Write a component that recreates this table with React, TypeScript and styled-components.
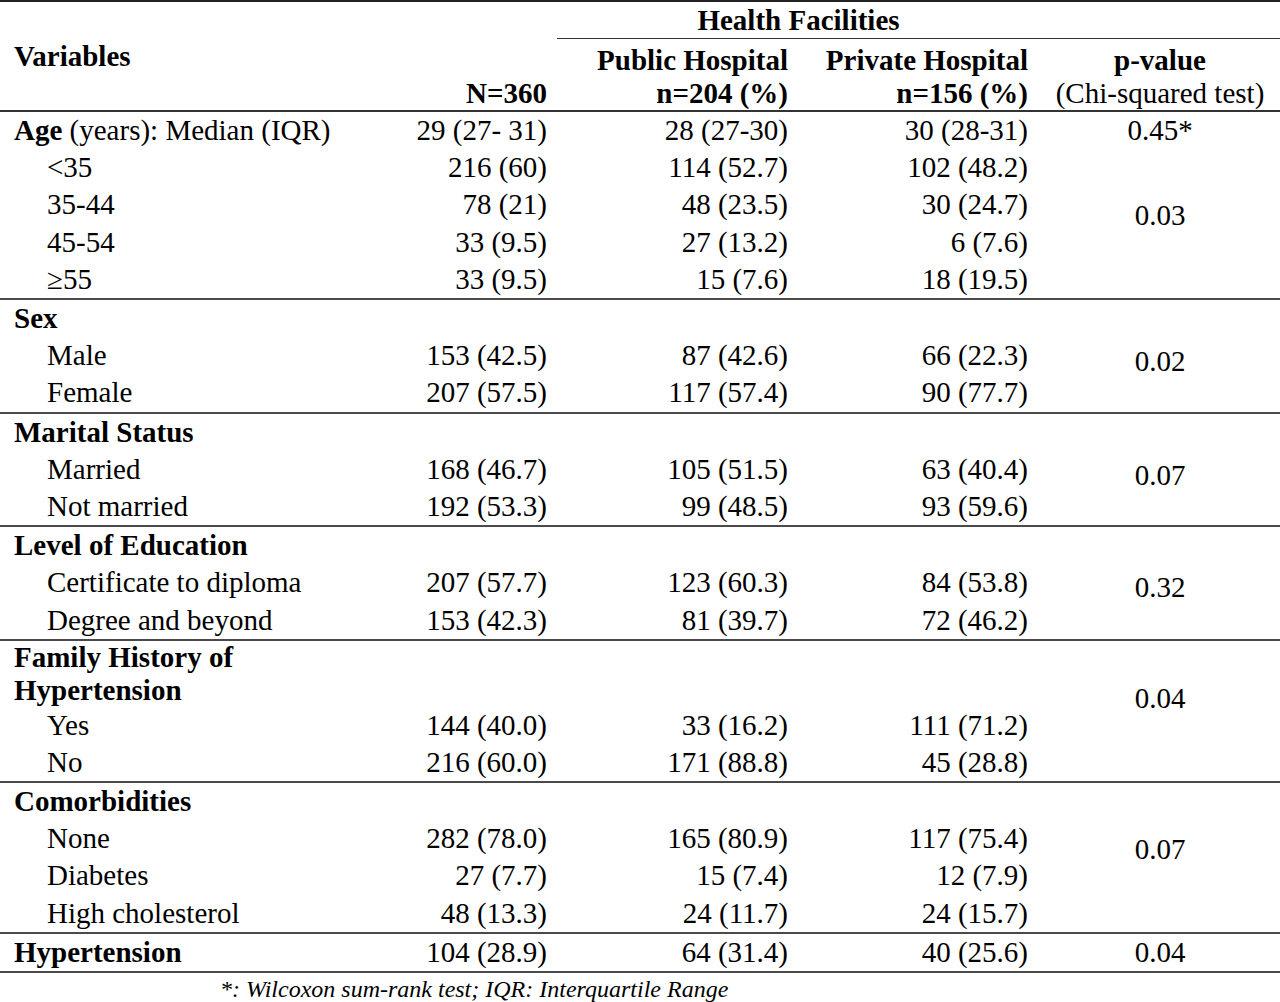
import styled, { createGlobalStyle, css } from "styled-components";

const GlobalStyle = createGlobalStyle`
  body {
    margin: 0;
    background: #fff;
  }
`;

type Triple = [string, string, string];

type Row = {
  label: string;
  bold?: string;
  sub?: boolean;
  wrap?: boolean;
  values?: Triple;
  p?: { text: string; span: number; shift?: number };
};

const groups: Row[][] = [
  [
    {
      bold: "Age",
      label: " (years): Median (IQR)",
      values: ["29 (27- 31)", "28 (27-30)", "30 (28-31)"],
      p: { text: "0.45*", span: 1 },
    },
    {
      label: "<35",
      sub: true,
      values: ["216 (60)", "114 (52.7)", "102 (48.2)"],
      p: { text: "0.03", span: 4, shift: -8 },
    },
    { label: "35-44", sub: true, values: ["78 (21)", "48 (23.5)", "30 (24.7)"] },
    { label: "45-54", sub: true, values: ["33 (9.5)", "27 (13.2)", "6 (7.6)"] },
    { label: "≥55", sub: true, values: ["33 (9.5)", "15 (7.6)", "18 (19.5)"] },
  ],
  [
    { bold: "Sex", label: "", p: { text: "0.02", span: 3, shift: 6 } },
    { label: "Male", sub: true, values: ["153 (42.5)", "87 (42.6)", "66 (22.3)"] },
    { label: "Female", sub: true, values: ["207 (57.5)", "117 (57.4)", "90 (77.7)"] },
  ],
  [
    { bold: "Marital Status", label: "", p: { text: "0.07", span: 3, shift: 6 } },
    { label: "Married", sub: true, values: ["168 (46.7)", "105 (51.5)", "63 (40.4)"] },
    { label: "Not married", sub: true, values: ["192 (53.3)", "99 (48.5)", "93 (59.6)"] },
  ],
  [
    { bold: "Level of Education", label: "", p: { text: "0.32", span: 3, shift: 5 } },
    {
      label: "Certificate to diploma",
      sub: true,
      values: ["207 (57.7)", "123 (60.3)", "84 (53.8)"],
    },
    {
      label: "Degree and beyond",
      sub: true,
      values: ["153 (42.3)", "81 (39.7)", "72 (46.2)"],
    },
  ],
  [
    {
      bold: "Family History of\nHypertension",
      label: "",
      wrap: true,
      p: { text: "0.04", span: 3, shift: -12 },
    },
    { label: "Yes", sub: true, values: ["144 (40.0)", "33 (16.2)", "111 (71.2)"] },
    { label: "No", sub: true, values: ["216 (60.0)", "171 (88.8)", "45 (28.8)"] },
  ],
  [
    { bold: "Comorbidities", label: "", p: { text: "0.07", span: 4, shift: -8 } },
    { label: "None", sub: true, values: ["282 (78.0)", "165 (80.9)", "117 (75.4)"] },
    { label: "Diabetes", sub: true, values: ["27 (7.7)", "15 (7.4)", "12 (7.9)"] },
    {
      label: "High cholesterol",
      sub: true,
      values: ["48 (13.3)", "24 (11.7)", "24 (15.7)"],
    },
  ],
  [
    {
      bold: "Hypertension",
      label: "",
      values: ["104 (28.9)", "64 (31.4)", "40 (25.6)"],
      p: { text: "0.04", span: 1 },
    },
  ],
];

// right padding of each numeric column, so values line up on their right edges
const numPad = [10, 2, 12];

export default function App() {
  return (
    <>
      <GlobalStyle />
      <Page>
        <Table>
          <colgroup>
            <col style={{ width: 380 }} />
            <col style={{ width: 177 }} />
            <col style={{ width: 233 }} />
            <col style={{ width: 250 }} />
            <col style={{ width: 240 }} />
          </colgroup>
          <thead>
            <tr>
              <VarHead rowSpan={2}>Variables</VarHead>
              <TotalHead rowSpan={2}>N=360</TotalHead>
              <SpanHead colSpan={2}>Health Facilities</SpanHead>
              <SpanHead />
            </tr>
            <tr>
              <ColHead $pad={numPad[1]}>
                Public Hospital
                <br />
                n=204 (%)
              </ColHead>
              <ColHead $pad={numPad[2]}>
                Private Hospital
                <br />
                n=156 (%)
              </ColHead>
              <PHead>
                p-value
                <br />
                <Normal>(Chi-squared test)</Normal>
              </PHead>
            </tr>
          </thead>
          {groups.map((rows, gi) => (
            <tbody key={gi}>
              {rows.map((row, ri) => (
                <DataRow
                  key={ri}
                  $ruled={ri === 0 && gi > 0}
                  $last={gi === groups.length - 1}
                >
                  <Label $sub={row.sub} $wrap={row.wrap}>
                    {row.bold && <strong>{row.bold}</strong>}
                    {row.label}
                  </Label>
                  {[0, 1, 2].map((i) => (
                    <Num key={i} $pad={numPad[i]} $wrap={row.wrap}>
                      {row.values ? row.values[i] : ""}
                    </Num>
                  ))}
                  {row.p && (
                    <PCell rowSpan={row.p.span} $shift={row.p.shift ?? 0}>
                      {row.p.text}
                    </PCell>
                  )}
                </DataRow>
              ))}
            </tbody>
          ))}
        </Table>
        <Footnote>*: Wilcoxon sum-rank test; IQR: Interquartile Range</Footnote>
      </Page>
    </>
  );
}

const Page = styled.div`
  width: 1280px;
  height: 1002px;
  overflow: hidden;
  font-family: "Liberation Serif", "Times New Roman", serif;
  color: #000;
`;

const Table = styled.table`
  width: 1280px;
  table-layout: fixed;
  border-collapse: separate;
  border-spacing: 0;
  font-size: 29px;
  line-height: 33px;

  td,
  th {
    padding: 0;
  }
`;

const headBase = css`
  font-weight: bold;
  white-space: nowrap;
`;

const VarHead = styled.th`
  ${headBase}
  border-top: 2px solid #222;
  border-bottom: 2px solid #333;
  text-align: left;
  vertical-align: middle;
  padding-left: 14px !important;
`;

const TotalHead = styled.th`
  ${headBase}
  border-top: 2px solid #222;
  border-bottom: 2px solid #333;
  text-align: right;
  vertical-align: bottom;
  padding-right: 10px !important;
`;

const SpanHead = styled.th`
  ${headBase}
  border-top: 2px solid #222;
  border-bottom: 1.5px solid #333;
  text-align: center;
  vertical-align: top;
  padding: 2px 0 1px !important;
`;

const ColHead = styled.th<{ $pad: number }>`
  ${headBase}
  border-bottom: 2px solid #333;
  text-align: right;
  vertical-align: top;
  padding: 5px ${(p) => p.$pad}px 0 0 !important;
`;

const PHead = styled.th`
  ${headBase}
  border-bottom: 2px solid #333;
  text-align: center;
  vertical-align: top;
  padding-top: 5px !important;
`;

const Normal = styled.span`
  font-weight: normal;
`;

const DataRow = styled.tr<{ $ruled: boolean; $last: boolean }>`
  td {
    ${(p) =>
      p.$ruled &&
      css`
        border-top: 2px solid #4a4a4a;
      `}
    ${(p) =>
      p.$last &&
      css`
        border-bottom: 2px solid #4a4a4a;
      `}
  }
`;

const Label = styled.td<{ $sub?: boolean; $wrap?: boolean }>`
  white-space: pre-line;
  padding: ${(p) => (p.$wrap ? "0" : "2.1px")} 0
    ${(p) => (p.$wrap ? "0" : "2.1px")}
    ${(p) => (p.$sub ? 47 : 14)}px !important;

  strong {
    font-weight: bold;
  }
`;

const Num = styled.td<{ $pad: number; $wrap?: boolean }>`
  text-align: right;
  white-space: nowrap;
  padding: ${(p) => (p.$wrap ? "0" : "2.1px")} ${(p) => p.$pad}px
    ${(p) => (p.$wrap ? "0" : "2.1px")} 0 !important;
`;

const PCell = styled.td<{ $shift: number }>`
  text-align: center;
  vertical-align: middle;
  padding-top: ${(p) => Math.max(0, p.$shift * 2)}px !important;
  padding-bottom: ${(p) => Math.max(0, -p.$shift * 2)}px !important;
`;

const Footnote = styled.div`
  padding: 3px 0 0 220px;
  font-size: 24px;
  line-height: 27px;
  font-style: italic;
`;
